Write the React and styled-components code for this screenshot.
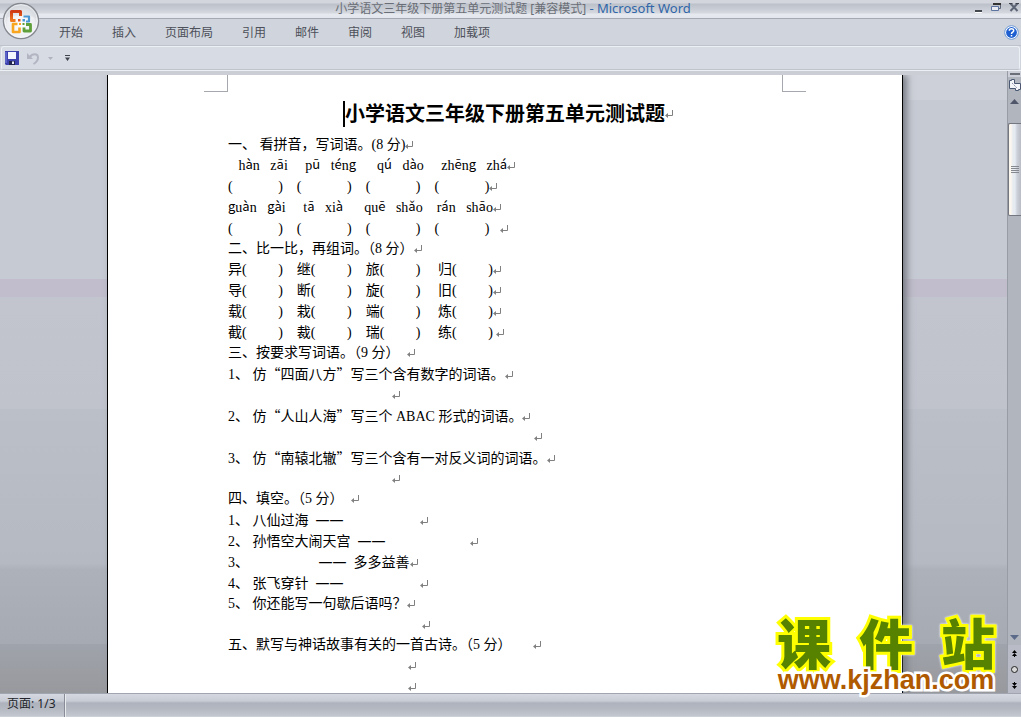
import React from "react";
import styled, { createGlobalStyle } from "styled-components";

const cjk = `"Noto Sans CJK SC"`;

const menus = ["开始", "插入", "页面布局", "引用", "邮件", "审阅", "视图", "加载项"];

const wordPairs = [
  ["异", "继", "旅", "归"],
  ["导", "断", "旋", "旧"],
  ["载", "栽", "端", "炼"],
  ["截", "裁", "瑞", "练"],
];

const sp = (n) => " ".repeat(n);

function Mark() {
  return (
    <MarkIcon width="8" height="8" viewBox="0 0 8 8" aria-hidden="true">
      <path d="M7.5 0V5.5H1" fill="none" stroke="#808080" />
      <path d="M0 5.5L3 3V8Z" fill="#808080" />
    </MarkIcon>
  );
}

// Toned vowels and g are set in the CJK face, the other letters in the serif
function Pinyin({ children }) {
  return children.split(/([āáǎàēéěèūúg])/).map((part, i) => (i % 2 ? <Tone key={i}>{part}</Tone> : part));
}

function Item({ n, children }) {
  return (
    <Line>
      {n}、 {children}
      <Mark />
    </Line>
  );
}

function OfficeLogo() {
  return (
    <svg width="38" height="38" viewBox="0 0 38 38" aria-hidden="true">
      <defs>
        <radialGradient id="orb" cx="50%" cy="60%" r="65%">
          <stop offset="0" stopColor="#ffffff" />
          <stop offset="0.6" stopColor="#eceef1" />
          <stop offset="1" stopColor="#b4b8bf" />
        </radialGradient>
        <linearGradient id="red" x2="0" y2="1">
          <stop offset="0" stopColor="#cf3a14" />
          <stop offset="1" stopColor="#f07a1c" />
        </linearGradient>
      </defs>
      <circle cx="19" cy="19" r="17.6" fill="url(#orb)" stroke="#85888f" strokeWidth="1.3" />
      <circle cx="19" cy="19" r="16.2" fill="none" stroke="#f7f8fa" />
      <path d="M3 17C7 12 31 12 35 17C34 7 27 3 19 3C11 3 4 7 3 17Z" fill="#d9dce1" opacity="0.6" />
      <g fill="none" strokeLinejoin="round">
        <path d="M13.500 18.500H9.500V9.500H18.500V14" stroke="url(#red)" strokeWidth="3" />
        <path d="M21.500 14.500H27V19.500H24" stroke="#4a97d6" strokeWidth="2.200" />
        <path d="M15.500 22H11V30H17.500V25.500" stroke="#f8a51f" strokeWidth="2.600" />
        <path d="M22 25.500V29H28.500V22.500H24" stroke="#5fa03a" strokeWidth="2.800" />
      </g>
      <path d="M16 17h2.500v2.500h-2.500z" fill="#e4561c" />
      <path d="M20.500 17h2.500v2.500h-2.500z" fill="#4a97d6" />
      <path d="M17 21h2v2h-2z" fill="#f8a51f" />
      <path d="M20.500 21h2v2h-2z" fill="#5fa03a" />
    </svg>
  );
}

function App() {
  return (
    <Window>
      <GlobalStyle />
      <TitleBar>
        <TitleText>
          小学语文三年级下册第五单元测试题 [兼容模式] <AppName>- Microsoft Word</AppName>
        </TitleText>
        <WindowButtons>
          <IconButton aria-label="最小化">
            <svg width="9" height="11" viewBox="0 0 9 11">
              <path d="M1 9H8" stroke="#44484f" strokeWidth="2" />
              <path d="M1 10.500H8" stroke="#fff" />
            </svg>
          </IconButton>
          <IconButton aria-label="还原">
            <svg width="10" height="9" viewBox="0 0 10 9">
              <path d="M2.500 2V1H9.500V5.500H8" fill="none" stroke="#5d6679" />
              <path d="M2 1H10" stroke="#333" strokeWidth="2" />
              <path d="M0.500 3.500H7.500V7.500H0.500Z" fill="#e8ebf1" stroke="#5d74a0" />
            </svg>
          </IconButton>
          <IconButton aria-label="关闭">
            <svg width="10" height="9" viewBox="0 0 10 9">
              <path d="M1.500 0.500L8.500 8M8.500 0.500L1.500 8" stroke="#5c6575" strokeWidth="2" />
              <path d="M0 0.500H3.500M6.500 0.500H10" stroke="#3c4049" />
            </svg>
          </IconButton>
        </WindowButtons>
      </TitleBar>
      <MenuBar>
        {menus.map((name) => (
          <MenuButton key={name}>{name}</MenuButton>
        ))}
        <HelpButton aria-label="帮助">
          <svg width="15" height="15" viewBox="0 0 15 15">
            <circle cx="7.500" cy="7.500" r="6.800" fill="#fff" stroke="#6e9ad6" />
            <circle cx="7.500" cy="7.500" r="5.400" fill="#1d5fd0" />
            <path d="M5.300 5.800C5.300 3 9.700 3 9.700 5.700C9.700 7.200 7.500 7.200 7.500 8.900M7.500 10V11.400" fill="none" stroke="#fff" strokeWidth="1.500" />
          </svg>
        </HelpButton>
      </MenuBar>
      <OfficeButton aria-label="Office">
        <OfficeLogo />
      </OfficeButton>
      <QuickBar>
        <IconButton aria-label="保存">
          <svg width="14" height="14" viewBox="0 0 14 14">
            <path d="M0 0H14V14H1L0 13Z" fill="#3c41ad" />
            <path d="M3 1H11V8H3Z" fill="#f3f6ff" />
            <path d="M4 10H10V14H4Z" fill="#22254f" />
            <path d="M7 10.500H9V13H7Z" fill="#e8eaf5" />
            <path d="M1 1V12" stroke="#7d86e0" />
          </svg>
        </IconButton>
        <IconButton aria-label="撤消">
          <svg width="13" height="13" viewBox="0 0 13 13">
            <path d="M0 1V7H6Z" fill="#b3b6c2" />
            <path d="M3 5C5 1.500 11 1 11 5.500C11 8.500 9 10.500 6.500 12" fill="none" stroke="#b3b6c2" strokeWidth="2" />
          </svg>
        </IconButton>
        <IconButton aria-label="撤消选项">
          <svg width="5" height="3" viewBox="0 0 5 3">
            <path d="M0 0H5L2.500 3Z" fill="#b0b3bd" />
          </svg>
        </IconButton>
        <CustomizeButton aria-label="自定义">
          <svg width="5" height="6" viewBox="0 0 5 6">
            <path d="M0 0H5V1H0ZM0 2.500H5L2.500 6Z" fill="#40444c" />
          </svg>
        </CustomizeButton>
      </QuickBar>
      <Workspace>
        <Desk>
          <Page>
            <Corners>
              <Corner $side="right" />
              <Corner $side="left" />
            </Corners>
            <PaperTitle>
              <Caret />
              小学语文三年级下册第五单元测试题
              <Mark />
            </PaperTitle>
            <Heading>
              一、 看拼音，写词语。(8 分)
              <Mark />
            </Heading>
            <Line>
              {sp(3)}
              <Pinyin>{["hàn", "zāi"].join(sp(3)) + sp(5) + ["pū", "téng"].join(sp(3)) + sp(6) + ["qú", "dào"].join(sp(3)) + sp(5) + ["zhēng", "zhá"].join(sp(3))}</Pinyin>
              <Mark />
            </Line>
            <Line>
              {Array(4).fill(`(${sp(13)})`).join(sp(4))}
              <Mark />
            </Line>
            <Line>
              <Pinyin>{["guàn", "gài"].join(sp(3)) + sp(5) + ["tā", "xià"].join(sp(3)) + sp(6) + ["quē", "shǎo"].join(sp(3)) + sp(4) + ["rán", "shāo"].join(sp(3))}</Pinyin>
              <Mark />
            </Line>
            <Line>
              {Array(4).fill(`(${sp(13)})`).join(sp(4)) + sp(3)}
              <Mark />
            </Line>
            <Heading>
              二、比一比，再组词。（8 分）
              <Mark />
            </Heading>
            {wordPairs.map(([a, b, c, d], i) => (
              <Line key={a}>
                {[a, b, c].map((word) => `${word}(${sp(9)})`).join(sp(4))}
                {`${sp(5)}${d}(${sp(9)})${i === 3 ? sp(1) : ""}`}
                <Mark />
              </Line>
            ))}
            <Heading>
              三、按要求写词语。（9 分）{sp(2)}
              <Mark />
            </Heading>
            <Item n={1}>
              仿<Cjk>“四面八方”</Cjk>写三个含有数字的词语。
            </Item>
            <Line>
              <Blank $width={164} />
              <Mark />
            </Line>
            <Item n={2}>
              仿<Cjk>“人山人海”</Cjk>写三个 ABAC 形式的词语。
            </Item>
            <Line>
              <Blank $width={306} />
              <Mark />
            </Line>
            <Item n={3}>
              仿<Cjk>“南辕北辙”</Cjk>写三个含有一对反义词的词语。
            </Item>
            <Line>
              <Blank $width={164} />
              <Mark />
            </Line>
            <Heading>
              四、填空。（5 分）{sp(2)}
              <Mark />
            </Heading>
            <Item n={1}>
              八仙过海{sp(2)}
              <Dash>——</Dash>
              <Blank $width={76} />
            </Item>
            <Item n={2}>
              孙悟空大闹天宫{sp(2)}
              <Dash>——</Dash>
              <Blank $width={84} />
            </Item>
            <Item n={3}>
              <Blank $width={66} />
              <Dash>——</Dash>
              {sp(2)}多多益善
            </Item>
            <Item n={4}>
              张飞穿针{sp(2)}
              <Dash>——</Dash>
              <Blank $width={76} />
            </Item>
            <Item n={5}>你还能写一句歇后语吗？</Item>
            <Line>
              <Blank $width={194} />
              <Mark />
            </Line>
            <Heading>
              五、默写与神话故事有关的一首古诗。（5 分）{sp(6)}
              <Mark />
            </Heading>
            <Line>
              <Blank $width={180} />
              <Mark />
            </Line>
            <Line>
              <Blank $width={180} />
              <Mark />
            </Line>
          </Page>
        </Desk>
        <ScrollBar>
          <Splitter />
          <RulerButton aria-label="标尺">
            <svg width="12" height="12" viewBox="0 0 12 12">
              <path d="M0.500 1.500H2.500V0.500H5.500V4.500H11.500V10.500H9.500V11.500H6.500V9.500H0.500Z" fill="#f4f5f8" stroke="#4a5872" />
              <path d="M3 4L8 9" fill="none" stroke="#8a94a8" strokeDasharray="2 1" />
            </svg>
          </RulerButton>
          <ArrowButton aria-label="向上滚动">
            <svg width="9" height="5" viewBox="0 0 9 5">
              <path d="M0 5L4.500 0L9 5Z" fill="#50566a" />
            </svg>
          </ArrowButton>
          <Track>
            <Thumb>
              <svg width="8" height="7" viewBox="0 0 8 7">
                <path d="M0 0.500H8M0 2.500H8M0 4.500H8M0 6.500H8" stroke="#85888f" />
              </svg>
            </Thumb>
          </Track>
          <ArrowButton aria-label="向下滚动">
            <svg width="9" height="5" viewBox="0 0 9 5">
              <path d="M0 0L4.500 5L9 0Z" fill="#5a6a88" />
            </svg>
          </ArrowButton>
          <BrowseButton aria-label="前一页">
            <svg width="5" height="7" viewBox="0 0 5 7">
              <path d="M0 3L2.500 0L5 3ZM0 6L2.500 3L5 6ZM2 6H3V7H2Z" fill="#000" />
            </svg>
          </BrowseButton>
          <BrowseButton aria-label="选择浏览对象">
            <svg width="7" height="7" viewBox="0 0 7 7">
              <circle cx="3.500" cy="3.500" r="3" fill="#d8d8d8" stroke="#222" />
            </svg>
          </BrowseButton>
          <BrowseButton aria-label="下一页">
            <svg width="5" height="7" viewBox="0 0 5 7">
              <path d="M0 1H5L2.500 4ZM0 4H5L2.500 7ZM2 0H3V1H2Z" fill="#000" />
            </svg>
          </BrowseButton>
        </ScrollBar>
        <Watermark>
          <Brand>
            <span>课</span>
            <span>件</span>
            <span>站</span>
          </Brand>
          <SiteUrl>www.kjzhan.com</SiteUrl>
        </Watermark>
      </Workspace>
      <StatusBar>
        <PageCount>页面: 1/3</PageCount>
      </StatusBar>
    </Window>
  );
}

export default App;

const GlobalStyle = createGlobalStyle`
  * {
    box-sizing: border-box;
  }

  body {
    margin: 0;
    overflow: hidden;
    font-family: "Noto Sans", ${cjk}, sans-serif;
  }

  svg {
    display: block;
  }
`;

const Window = styled.div`
  position: relative;
  display: flex;
  flex-direction: column;
  height: 100vh;
  background: #d0d4dc;
`;

const TitleBar = styled.header`
  display: flex;
  align-items: center;
  flex: none;
  height: 19px;
  padding: 0 2px 0 6px;
  background: linear-gradient(#d3d6dd 0 3px, #bcc0c9 4px, #c6cad2 8px, #d5d8df 13px, #e6e9ee 14px, #e3e7ed 18px);
  border-bottom: 1px solid #a4a9b3;
`;

const TitleText = styled.h1`
  flex: 1;
  margin: 0;
  padding-left: 46px;
  font-size: 12px;
  font-weight: 400;
  line-height: 18px;
  text-align: center;
  color: #6a6e76;
`;

const AppName = styled.span`
  font-size: 13px;
  line-height: 1;
  color: #2f66a9;
`;

const WindowButtons = styled.div`
  display: flex;
  align-items: center;
  gap: 8px;
  padding-bottom: 3px;
`;

const IconButton = styled.button`
  padding: 0;
  border: 0;
  background: none;
`;

const MenuBar = styled.nav`
  display: flex;
  align-items: center;
  flex: none;
  gap: 29px;
  height: 27px;
  padding: 0 2px 0 59px;
  background: #d0d4dc;
  border-bottom: 1px solid #bfc3cc;
`;

const MenuButton = styled(IconButton)`
  font-family: ${cjk}, sans-serif;
  font-size: 12px;
  line-height: 18px;
  color: #4c505a;
`;

const HelpButton = styled(IconButton)`
  margin-left: auto;
`;

const OfficeButton = styled(IconButton)`
  position: absolute;
  top: 2px;
  left: 2px;
`;

const QuickBar = styled.div`
  display: flex;
  align-items: center;
  flex: none;
  gap: 8px;
  height: 24px;
  margin: 0 1px;
  padding-left: 3px;
  background: #d7dbe4;
  border: 1px solid #eceff4;
  border-bottom-color: #bfc3cb;
  border-radius: 3px;
`;

const CustomizeButton = styled(IconButton)`
  padding-left: 4px;
`;

const Workspace = styled.main`
  position: relative;
  display: flex;
  flex: 1;
  min-height: 0;
  border-top: 1px solid #eceff4;
`;

const Desk = styled.div`
  flex: 1;
  padding: 0 104px 0 107px;
  overflow: hidden;
  background: linear-gradient(
    #cdd0d8 0 4%,
    #c6cad3 4% 33%,
    #c1bdcc 33% 36%,
    #c2c5ce 36%,
    #c0c3cc 54%,
    #bbbfc8 54%,
    #b5b9c2 79%,
    #adb1b9 80%,
    #a6aab2 92%,
    #9fa3ab 92%,
    #98999d
  );
  border-top: 4px solid #cbced4;
`;

const Page = styled.article`
  height: 100%;
  padding: 0 120px;
  overflow: hidden;
  background: #fff;
  border: solid #000;
  border-width: 0 1px;
  box-shadow: 4px 0 7px #777b83;
  font-family: "Liberation Serif", ${cjk}, serif;
  font-size: 14px;
  color: #000;
  white-space: pre;
`;

const Corners = styled.div`
  display: flex;
  justify-content: space-between;
  margin: 0 -24px;
`;

const Corner = styled.div`
  width: 24px;
  height: 17px;
  border-bottom: 1px solid #a5a8ad;
  border-${(props) => props.$side}: 1px solid #a5a8ad;
`;

const MarkIcon = styled.svg`
  display: inline-block;
`;

const PaperTitle = styled.h2`
  display: flex;
  align-items: center;
  justify-content: center;
  height: 26px;
  margin: 9px 0 8px;
  font-size: 20px;
  font-weight: 700;
  line-height: 24px;

  /* only the text itself is centred */
  ${MarkIcon} {
    margin-right: -8px;
  }
`;

const Caret = styled.span`
  width: 2px;
  height: 26px;
  margin-left: -2px;
  background: #000;
`;

const Line = styled.p`
  height: 21px;
  margin: 0;
  line-height: 21px;
`;

const Heading = styled.h3`
  height: 20px;
  margin: 0;
  font-size: 14px;
  font-weight: 400;
  line-height: 20px;
`;

const Tone = styled.span`
  font-family: ${cjk}, sans-serif;
  font-size: 13px;
  line-height: 1;
  vertical-align: 1px;
`;

const Cjk = styled.span`
  font-family: ${cjk}, sans-serif;
`;

const Dash = styled.span`
  font-family: "Noto Sans", sans-serif;
`;

const Blank = styled.span`
  display: inline-block;
  width: ${(props) => props.$width}px;
`;

const ScrollBar = styled.aside`
  display: flex;
  flex-direction: column;
  align-items: stretch;
  width: 14px;
  background: #b1b5be;
  border-left: 1px solid #989ca5;
`;

const Splitter = styled.div`
  flex: none;
  height: 6px;
  background: #6b6f78;
  border: solid #cdd0d8;
  border-width: 2px 1px 2px 2px;
`;

const RulerButton = styled(IconButton)`
  display: flex;
  justify-content: center;
  padding: 2px 0;
`;

const ArrowButton = styled(IconButton)`
  display: flex;
  align-items: center;
  justify-content: center;
  flex: none;
  height: 16px;
`;

const Track = styled.div`
  flex: 1;
  padding-top: 14px;
`;

const Thumb = styled.div`
  display: flex;
  align-items: center;
  justify-content: center;
  height: 93px;
  background: linear-gradient(90deg, #fbf6ee 0 2px, #e6eaf1 4px 6px, #ccd0da 8px, #b9bcc4);
  border: 1px solid #74777f;
  border-right: 0;
  border-radius: 2px 0 0 2px;
`;

const BrowseButton = styled(ArrowButton)`
  background: #b9bcc6;
`;

const Watermark = styled.div`
  position: absolute;
  right: 22px;
  bottom: 0;
  width: 226px;
  paint-order: stroke fill;
  text-align: center;
`;

const Brand = styled.div`
  display: flex;
  justify-content: space-between;
  padding: 0 4px;
  font-family: ${cjk}, sans-serif;
  font-size: 54px;
  font-weight: 900;
  line-height: 50px;
  color: #578200;
  -webkit-text-stroke: 6px #ffff00;
  filter: drop-shadow(0 0 1px #fff);
`;

const SiteUrl = styled.div`
  position: relative;
  font-family: "Liberation Sans", sans-serif;
  font-size: 27px;
  font-weight: 700;
  line-height: 26px;
  color: #b05a00;
  -webkit-text-stroke: 5px #fff;
`;

const StatusBar = styled.footer`
  display: flex;
  flex: none;
  height: 24px;
  background: linear-gradient(#d5d8e0, #c8ccd5 7px, #adb2bc 9px, #b5b9c2 15px, #c3c7cf 22px, #d5d8de);
  border-top: 1px solid #a0a5b0;
`;

const PageCount = styled.div`
  padding: 0 8px 0 7px;
  font-size: 12px;
  line-height: 20px;
  color: #22252b;
  border-right: 1px solid #888c96;
  box-shadow: 1px 0 0 #e8eaee;
`;
